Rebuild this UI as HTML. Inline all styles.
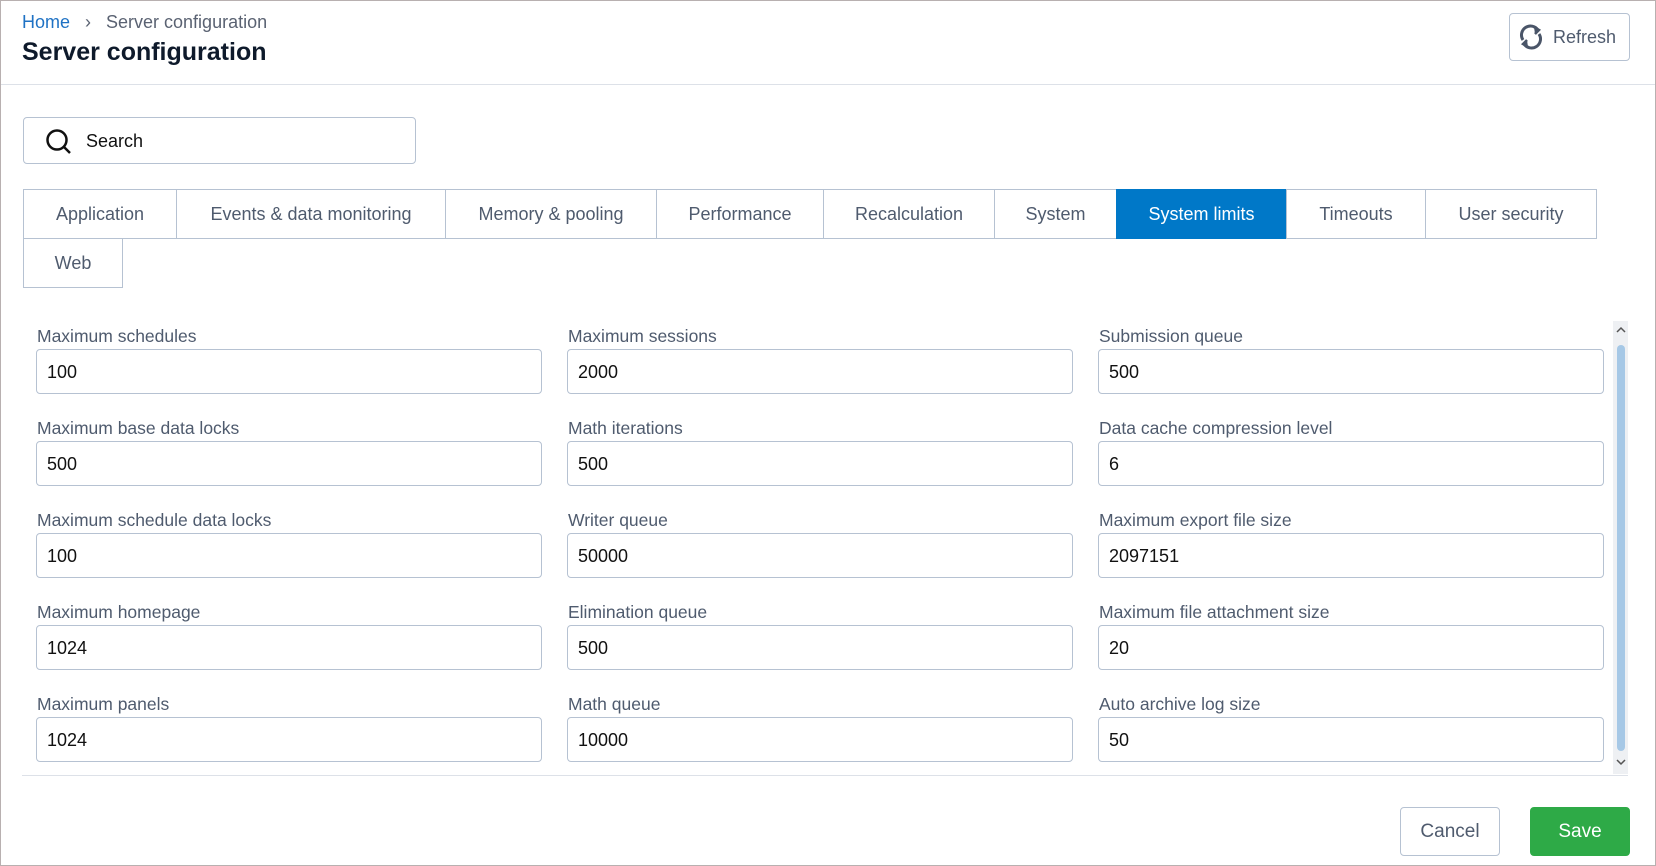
<!DOCTYPE html>
<html><head><meta charset="utf-8"><style>
*{box-sizing:border-box;margin:0;padding:0}
body{width:1656px;height:866px;position:relative;background:#fff;font-family:"Liberation Sans",sans-serif;overflow:hidden}
.frame{position:absolute;left:0;top:0;width:1656px;height:866px;border:1px solid #b8b0b0}
.a{position:absolute}
.bc{left:22px;top:12px;font-size:18px;color:#5a6272}
.bc .h{color:#1f72c4}
.title{left:22px;top:38px;font-size:25px;font-weight:bold;color:#0e1a2b}
.hl{left:1px;top:84px;width:1654px;height:1px;background:#dde1e8}
.btn{position:absolute;border:1px solid #b6c2d2;border-radius:4px;font-size:19px;color:#4f5b6e;display:flex;align-items:center;justify-content:center;background:#fff}
.search{left:23px;top:117px;width:393px;height:47px;border:1px solid #b6c2d2;border-radius:4px;font-size:18px;color:#111}
.tab{position:absolute;border:1px solid #b6c2d2;font-size:18px;color:#4f5b6e;display:flex;align-items:center;justify-content:center;background:#fff}
.tab.on{background:#0078c8;color:#fff;border-color:#0078c8}
.lab{position:absolute;font-size:17.5px;color:#4f5b6e}
.inp{position:absolute;height:45px;border:1px solid #b6c2d2;border-radius:4px;font-size:18px;color:#111;padding-left:10px;display:flex;align-items:center;padding-top:2px}
</style></head><body>
<div class="frame"></div>
<div class="a bc"><span class="h">Home</span>&nbsp;&nbsp;&nbsp;›&nbsp;&nbsp;&nbsp;Server configuration</div>
<div class="a title">Server configuration</div>
<div class="btn" style="left:1509px;top:13px;width:121px;height:48px;justify-content:flex-start;padding-left:7px;font-size:18px">
<svg width="28" height="28" viewBox="0 0 28 28" fill="none" stroke="#4a5568" stroke-width="3"><path d="M6 17 A9 9 0 0 1 21 7"/><path d="M22 11 A9 9 0 0 1 7 21"/><path d="M17 4 l5 3 -4 4" stroke-width="2.5" fill="#4a5568"/><path d="M11 24 l-5 -3 4 -4" stroke-width="2.5" fill="#4a5568"/></svg>
<span style="margin-left:8px">Refresh</span></div>
<div class="a hl"></div>
<div class="a search"><svg class="a" style="left:21px;top:10px" width="28" height="28" viewBox="0 0 28 28" fill="none" stroke="#111" stroke-width="2.5"><circle cx="12" cy="12" r="9.5"/><path d="M19 19 L25 25"/></svg><span class="a" style="left:62px;top:13px">Search</span></div>

<div class="tab" style="left:23px;top:189px;width:154px;height:50px">Application</div>
<div class="tab" style="left:176px;top:189px;width:270px;height:50px">Events &amp; data monitoring</div>
<div class="tab" style="left:445px;top:189px;width:212px;height:50px">Memory &amp; pooling</div>
<div class="tab" style="left:656px;top:189px;width:168px;height:50px">Performance</div>
<div class="tab" style="left:823px;top:189px;width:172px;height:50px">Recalculation</div>
<div class="tab" style="left:994px;top:189px;width:123px;height:50px">System</div>
<div class="tab on" style="left:1116px;top:189px;width:171px;height:50px">System limits</div>
<div class="tab" style="left:1286px;top:189px;width:140px;height:50px">Timeouts</div>
<div class="tab" style="left:1425px;top:189px;width:172px;height:50px">User security</div>
<div class="tab" style="left:23px;top:238px;width:100px;height:50px">Web</div>

<div class="lab" style="left:37px;top:326px">Maximum schedules</div><div class="inp" style="left:36px;top:349px;width:506px">100</div>
<div class="lab" style="left:568px;top:326px">Maximum sessions</div><div class="inp" style="left:567px;top:349px;width:506px">2000</div>
<div class="lab" style="left:1099px;top:326px">Submission queue</div><div class="inp" style="left:1098px;top:349px;width:506px">500</div>

<div class="lab" style="left:37px;top:418px">Maximum base data locks</div><div class="inp" style="left:36px;top:441px;width:506px">500</div>
<div class="lab" style="left:568px;top:418px">Math iterations</div><div class="inp" style="left:567px;top:441px;width:506px">500</div>
<div class="lab" style="left:1099px;top:418px">Data cache compression level</div><div class="inp" style="left:1098px;top:441px;width:506px">6</div>

<div class="lab" style="left:37px;top:510px">Maximum schedule data locks</div><div class="inp" style="left:36px;top:533px;width:506px">100</div>
<div class="lab" style="left:568px;top:510px">Writer queue</div><div class="inp" style="left:567px;top:533px;width:506px">50000</div>
<div class="lab" style="left:1099px;top:510px">Maximum export file size</div><div class="inp" style="left:1098px;top:533px;width:506px">2097151</div>

<div class="lab" style="left:37px;top:602px">Maximum homepage</div><div class="inp" style="left:36px;top:625px;width:506px">1024</div>
<div class="lab" style="left:568px;top:602px">Elimination queue</div><div class="inp" style="left:567px;top:625px;width:506px">500</div>
<div class="lab" style="left:1099px;top:602px">Maximum file attachment size</div><div class="inp" style="left:1098px;top:625px;width:506px">20</div>

<div class="lab" style="left:37px;top:694px">Maximum panels</div><div class="inp" style="left:36px;top:717px;width:506px">1024</div>
<div class="lab" style="left:568px;top:694px">Math queue</div><div class="inp" style="left:567px;top:717px;width:506px">10000</div>
<div class="lab" style="left:1099px;top:694px">Auto archive log size</div><div class="inp" style="left:1098px;top:717px;width:506px">50</div>

<div class="a" style="left:1613px;top:321px;width:15px;height:453px;background:#eef0f3"></div>
<div class="a" style="left:1617px;top:345px;width:8px;height:406px;background:#a6c8e6;border-radius:4px"></div>
<svg class="a" style="left:1615px;top:325px" width="12" height="10" viewBox="0 0 12 10"><path d="M2 7 L6 3 L10 7" fill="none" stroke="#555" stroke-width="1.5"/></svg>
<svg class="a" style="left:1615px;top:757px" width="12" height="10" viewBox="0 0 12 10"><path d="M2 3 L6 7 L10 3" fill="none" stroke="#555" stroke-width="1.5"/></svg>
<div class="a" style="left:22px;top:775px;width:1606px;height:1px;background:#dde1e8"></div>

<div class="btn" style="left:1400px;top:807px;width:100px;height:49px">Cancel</div>
<div class="btn" style="left:1530px;top:807px;width:100px;height:49px;background:#2eaa47;border-color:#2eaa47;color:#fff">Save</div>
</body></html>
